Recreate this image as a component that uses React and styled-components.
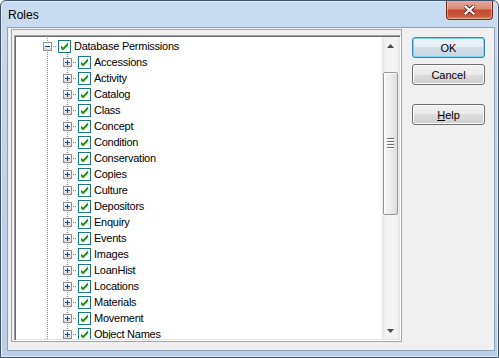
import styled, { createGlobalStyle } from "styled-components";

const items = [
    "Accessions", "Activity", "Catalog", "Class", "Concept", "Condition",
    "Conservation", "Copies", "Culture", "Depositors", "Enquiry", "Events",
    "Images", "LoanHist", "Locations", "Materials", "Movement", "Object Names",
];

export default function App(){
    return(
        <>
            <Global />
            <Window>
                <TitleBar>
                    <Title>Roles</Title>
                    <CloseButton>
                        <svg width="11" height="10" viewBox="0 0 11 10">
                            <path d="M1.5 1.5 L9.5 8.5 M9.5 1.5 L1.5 8.5" stroke="#5a2418" strokeWidth="4" strokeLinecap="square" />
                            <path d="M1.5 1.5 L9.5 8.5 M9.5 1.5 L1.5 8.5" stroke="#ffffff" strokeWidth="2.2" strokeLinecap="square" />
                        </svg>
                    </CloseButton>
                </TitleBar>
                <FrameBody>
                    <Client>
                        <Panel>
                            <Tree>
                                <List>
                                    <Row>
                                        <Indent />
                                        <Cell>
                                            <Expander><Sign minus /></Expander>
                                            <Connector />
                                        </Cell>
                                        <Check />
                                        <Label>Database Permissions</Label>
                                    </Row>
                                    {items.map((name) => (
                                        <Row key={name}>
                                            <Indent />
                                            <Cell />
                                            <Cell>
                                                <Expander><Sign /></Expander>
                                                <Connector />
                                            </Cell>
                                            <Check />
                                            <Label>{name}</Label>
                                        </Row>
                                    ))}
                                </List>
                                <ScrollBar>
                                    <Arrow>
                                        <svg width="7" height="4" viewBox="0 0 7 4"><path d="M3.5 0 L7 4 L0 4 Z" fill="#4a4a4a" /></svg>
                                    </Arrow>
                                    <Track>
                                        <Thumb>
                                            <Grip /><Grip /><Grip /><Grip />
                                        </Thumb>
                                    </Track>
                                    <Arrow>
                                        <svg width="7" height="4" viewBox="0 0 7 4"><path d="M0 0 L7 0 L3.5 4 Z" fill="#4a4a4a" /></svg>
                                    </Arrow>
                                </ScrollBar>
                            </Tree>
                        </Panel>
                        <Buttons>
                            <Button $default>OK</Button>
                            <Button>Cancel</Button>
                            <Button $gap>
                                <u>H</u>elp
                            </Button>
                        </Buttons>
                    </Client>
                </FrameBody>
            </Window>
        </>
    );
}

function Sign({minus}){
    return(
        <svg width="7" height="7" viewBox="0 0 7 7">
            <rect x="1" y="3" width="5" height="1" fill="#1e3c8c" />
            {!minus && <rect x="3" y="1" width="1" height="5" fill="#1e3c8c" />}
        </svg>
    );
}

function Check(){
    return(
        <CheckBox>
            <svg width="11" height="11" viewBox="0 0 11 11">
                <path d="M2 4.5 L4 6.5 L9 1.5 L9 4.5 L4 9.5 L2 7.5 Z" fill="#1f9a1f" />
            </svg>
        </CheckBox>
    );
}

const Global = createGlobalStyle`
    html, body {
        margin: 0;
        padding: 0;
        background: #ffffff;
    }
    body {
        font-family: "Liberation Sans", Arial, sans-serif;
    }
`;

const Window = styled.div`
    width: 499px;
    height: 358px;
    box-sizing: border-box;
    display: flex;
    flex-direction: column;
    border: 1px solid #44556b;
    border-radius: 6px 6px 0 0;
    background: linear-gradient(to bottom, #cadcef 0%, #bfd3ea 40%, #b9cfe8 100%);
    box-shadow: inset 0 0 0 1px #dfe9f5;
    overflow: hidden;
`;

const TitleBar = styled.div`
    height: 26px;
    display: flex;
    align-items: flex-start;
    padding-left: 7px;
`;

const Title = styled.span`
    margin-top: 7px;
    font-size: 12px;
    line-height: 14px;
    color: #000000;
`;

const CloseButton = styled.div`
    margin-left: auto;
    margin-right: 5px;
    margin-top: -1px;
    width: 47px;
    height: 20px;
    box-sizing: border-box;
    display: flex;
    align-items: center;
    justify-content: center;
    border: 1px solid #6b2a1e;
    border-top: none;
    border-radius: 0 0 4px 4px;
    background: linear-gradient(to bottom, #e8ad9f 0%, #d98a76 45%, #c44b30 55%, #c9583c 85%, #db8a6c 100%);
    box-shadow: inset 0 0 0 1px rgba(255, 220, 210, 0.45);
`;

const FrameBody = styled.div`
    flex: 1;
    display: flex;
    padding: 0 3px 6px 6px;
`;

const Client = styled.div`
    flex: 1;
    display: flex;
    align-items: flex-start;
    border: 1px solid #8ea1b8;
    background: #f0f0f0;
    padding: 1px 0 0 3px;
`;

const Panel = styled.div`
    width: 391px;
    height: 313px;
    box-sizing: border-box;
    display: flex;
    border: 1px solid #a5a5a5;
    padding: 5px 0 0 2px;
`;

const Tree = styled.div`
    flex: 1;
    display: flex;
    background: #ffffff;
    border: 1px solid;
    border-color: #a0a0a0 #ffffff #ffffff #a0a0a0;
    box-shadow: inset 1px 1px 0 #696969, inset -1px -1px 0 #e3e3e3;
    padding: 1px;
    min-height: 0;
`;

const List = styled.div`
    flex: 1;
    overflow: hidden;
    padding-top: 1px;
`;

const Row = styled.div`
    height: 16px;
    display: flex;
    align-items: center;
`;

const Indent = styled.span`
    width: 21px;
    flex: none;
`;

const Cell = styled.span`
    width: 20px;
    height: 16px;
    flex: none;
    display: flex;
    align-items: center;
    background-image: linear-gradient(to bottom, #8c8c8c 50%, transparent 50%);
    background-size: 1px 2px;
    background-repeat: repeat-y;
    background-position: 10px 0;
`;

const Expander = styled.span`
    width: 9px;
    height: 9px;
    margin-left: 6px;
    box-sizing: border-box;
    display: flex;
    align-items: center;
    justify-content: center;
    border: 1px solid #919191;
    background: linear-gradient(to bottom, #ffffff 0%, #f0f0f0 50%, #d6d6d6 100%);
`;

const Connector = styled.span`
    width: 5px;
    height: 1px;
    margin-left: 1px;
    background-image: linear-gradient(to right, #8c8c8c 50%, transparent 50%);
    background-size: 2px 1px;
`;

const CheckBox = styled.span`
    width: 13px;
    height: 13px;
    margin-left: 1px;
    flex: none;
    box-sizing: border-box;
    display: flex;
    align-items: center;
    justify-content: center;
    border: 1px solid #1e7b7b;
    background: #ffffff;
`;

const Label = styled.span`
    margin-left: 3px;
    font-size: 11px;
    line-height: 13px;
    letter-spacing: -0.25px;
    color: #000000;
    white-space: nowrap;
`;

const ScrollBar = styled.div`
    width: 17px;
    flex: none;
    display: flex;
    flex-direction: column;
    background: linear-gradient(to right, #e6e6e6 0%, #f2f2f2 25%, #f4f4f4 75%, #ececec 100%);
`;

const Arrow = styled.div`
    height: 17px;
    flex: none;
    display: flex;
    align-items: center;
    justify-content: center;
`;

const Track = styled.div`
    flex: 1;
    padding-top: 18px;
`;

const Thumb = styled.div`
    height: 143px;
    margin: 0 1px;
    box-sizing: border-box;
    display: flex;
    flex-direction: column;
    align-items: center;
    justify-content: center;
    gap: 1px;
    border: 1px solid #979797;
    border-radius: 2px;
    background: linear-gradient(to right, #f6f6f6 0%, #ececec 50%, #dcdcdc 100%);
    box-shadow: inset 1px 1px 0 #ffffff;
`;

const Grip = styled.span`
    width: 7px;
    height: 1px;
    background: #6f6f6f;
    border-bottom: 1px solid #ffffff;
`;

const Buttons = styled.div`
    margin-left: 10px;
    margin-top: 8px;
    display: flex;
    flex-direction: column;
`;

const Button = styled.div`
    width: 73px;
    height: 21px;
    box-sizing: border-box;
    margin-top: ${(p) => (p.$gap ? "19px" : p.$default ? "0" : "6px")};
    display: flex;
    align-items: center;
    justify-content: center;
    font-size: 11px;
    color: #000000;
    border: 1px solid ${(p) => (p.$default ? "#3283c4" : "#707070")};
    border-radius: 3px;
    background: ${(p) => p.$default
        ? "linear-gradient(to bottom, #eef5fa 0%, #e4edf3 50%, #d2dee7 50%, #c8d6e1 100%)"
        : "linear-gradient(to bottom, #f2f2f2 0%, #ebebeb 50%, #dddddd 50%, #cfcfcf 100%)"};
    box-shadow: inset 0 0 0 1px ${(p) => (p.$default ? "#7dd3f7" : "#fcfcfc")};

    u {
        text-decoration: underline;
    }
`;
